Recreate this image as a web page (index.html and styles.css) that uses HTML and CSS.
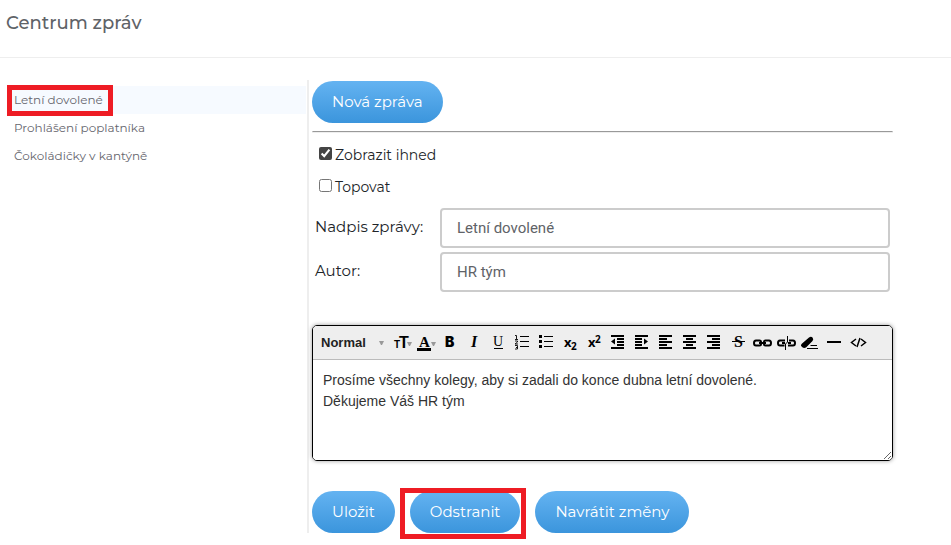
FILE: index.html
```html
<!DOCTYPE html>
<html lang="cs">
  <head>
    <meta charset="UTF-8" />
    <meta name="viewport" content="width=device-width, initial-scale=1.0" />
    <title>Centrum zpráv</title>
    <link rel="stylesheet" href="styles.css">
  </head>
  <body>
    <header class="page-header">
      <h1>Centrum zpráv</h1>
    </header>

    <div class="layout">
      <nav class="messages">
        <a href="#" class="message active"><span class="marked">Letní dovolené</span></a>
        <a href="#" class="message">Prohlášení poplatníka</a>
        <a href="#" class="message">Čokoládičky v kantýně</a>
      </nav>

      <main class="detail">
        <button type="button" class="btn">Nová zpráva</button>
        <hr />

        <form>
          <div class="check">
            <input type="checkbox" id="zobrazit" checked />
            <label for="zobrazit">Zobrazit ihned</label>
          </div>
          <div class="check">
            <input type="checkbox" id="topovat" />
            <label for="topovat">Topovat</label>
          </div>

          <div class="field">
            <label for="nadpis">Nadpis zprávy:</label>
            <input type="text" id="nadpis" value="Letní dovolené" />
          </div>
          <div class="field">
            <label for="autor">Autor:</label>
            <input type="text" id="autor" value="HR tým" />
          </div>

          <div class="editor">
            <div class="toolbar">
              <div class="format">
                <select aria-label="Formát">
                  <option>Normal</option>
                  <option>Header 1</option>
                  <option>Header 2</option>
                </select>
                <svg width="5" height="4" viewBox="0 0 5 4"><path d="M0 0h5L3 4H2z" fill="#999" /></svg>
              </div>
              <button type="button" class="tool" aria-label="Velikost písma">
                <svg viewBox="0 0 24 24">
                  <text x="4" y="18" class="sans" font-size="10">T</text>
                  <text x="9" y="18" class="sans" font-size="16">T</text>
                  <path d="M17 12h5l-2 4h-1z" fill="#999" />
                </svg>
              </button>
              <button type="button" class="tool" aria-label="Barva písma">
                <svg viewBox="0 0 24 24">
                  <text x="5" y="17" class="serif" font-size="15">A</text>
                  <path d="M3 18h14v3H3z" />
                  <path d="M17 12h5l-2 4h-1z" fill="#999" />
                </svg>
              </button>
              <button type="button" class="tool" aria-label="Tučně">
                <svg viewBox="0 0 24 24"><text x="7" y="17" class="heavy" font-size="14">B</text></svg>
              </button>
              <button type="button" class="tool" aria-label="Kurzíva">
                <svg viewBox="0 0 24 24"><text x="9" y="17" class="serif" font-size="16" font-style="italic">I</text></svg>
              </button>
              <button type="button" class="tool" aria-label="Podtržení">
                <svg viewBox="0 0 24 24">
                  <text x="7" y="16" class="serif light" font-size="14">U</text>
                  <path d="M8 18h9v1H8z" />
                </svg>
              </button>
              <button type="button" class="tool" aria-label="Číslovaný seznam">
                <svg viewBox="0 0 24 24">
                  <path d="M10 6h9v1h-9zM10 11h9v1h-9zM10 16h9v1h-9z" />
                  <path d="M5 5.500h1.500V9M5 9.500h3M5 11h2.500v1L5 14h3M5 15.500h2.500v3.500H5M6 17.500h1.500" fill="none" stroke="#000" stroke-width=".9" />
                </svg>
              </button>
              <button type="button" class="tool" aria-label="Seznam s odrážkami">
                <svg viewBox="0 0 24 24">
                  <path d="M10 6h9v1h-9zM10 11h9v1h-9zM10 16h9v1h-9z" />
                  <path d="M5 5h3v3H5zM5 10h3v3H5zM5 15h3v3H5z" />
                </svg>
              </button>
              <button type="button" class="tool" aria-label="Dolní index">
                <svg viewBox="0 0 24 24">
                  <text x="6" y="17" class="sub" font-size="13">x</text>
                  <text x="13" y="20" class="sub" font-size="10">2</text>
                </svg>
              </button>
              <button type="button" class="tool" aria-label="Horní index">
                <svg viewBox="0 0 24 24">
                  <text x="6" y="17" class="sub" font-size="13">x</text>
                  <text x="13" y="13" class="sub" font-size="10">2</text>
                </svg>
              </button>
              <button type="button" class="tool" aria-label="Zmenšit odsazení">
                <svg viewBox="0 0 24 24"><path d="M5 5h13v2H5zM11 8h7v2h-7zM11 11h7v2h-7zM11 14h7v2h-7zM5 17h13v2H5zM5 11.500l4-3v6z" /></svg>
              </button>
              <button type="button" class="tool" aria-label="Zvětšit odsazení">
                <svg viewBox="0 0 24 24"><path d="M5 5h13v2H5zM5 8h7v2H5zM5 11h7v2H5zM5 14h7v2H5zM5 17h13v2H5zM18 11.500l-4-3v6z" /></svg>
              </button>
              <button type="button" class="tool" aria-label="Zarovnat vlevo">
                <svg viewBox="0 0 24 24"><path d="M5 5h13v2H5zM5 8h8v2H5zM5 11h13v2H5zM5 14h8v2H5zM5 17h13v2H5z" /></svg>
              </button>
              <button type="button" class="tool" aria-label="Zarovnat na střed">
                <svg viewBox="0 0 24 24"><path d="M5 5h13v2H5zM8 8h7v2H8zM5 11h13v2H5zM8 14h7v2H8zM5 17h13v2H5z" /></svg>
              </button>
              <button type="button" class="tool" aria-label="Zarovnat vpravo">
                <svg viewBox="0 0 24 24"><path d="M5 5h13v2H5zM10 8h8v2h-8zM5 11h13v2H5zM10 14h8v2h-8zM5 17h13v2H5z" /></svg>
              </button>
              <button type="button" class="tool" aria-label="Přeškrtnutí">
                <svg viewBox="0 0 24 24">
                  <text x="8" y="17" class="serif" font-size="16">S</text>
                  <path d="M6 11h13v1H6z" />
                </svg>
              </button>
              <button type="button" class="tool" aria-label="Vložit odkaz">
                <svg viewBox="0 0 24 24"><path d="M11 12q0-1.500-1.500-1.500H6q-2 0-2 2.500t2 2.500h3.500Q11 15.500 11 14M14 12q0-1.500 1.500-1.500H19q2 0 2 2.500t-2 2.500h-3.500Q14 15.500 14 14M9 13h7" class="line" /></svg>
              </button>
              <button type="button" class="tool" aria-label="Odebrat odkaz">
                <svg viewBox="0 0 24 24">
                  <path d="M11 10.500H6q-2 0-2 2.500t2 2.500h4.500M15 10.500h4q2 0 2 2.500t-2 2.500h-5M8 13h3M14 13h3" class="line" />
                  <path d="M13.500 6v6l-2 2v6" fill="none" stroke="#000" />
                </svg>
              </button>
              <button type="button" class="tool" aria-label="Vymazat formátování">
                <svg viewBox="0 0 24 24"><path d="M3.500 14L11 7.500q2-1.500 3.500 0t0 3.500L8 17.500q-2 1-4-.500t-.500-3zM13 15h6v1h-7zM9 18h11v1H9z" /></svg>
              </button>
              <button type="button" class="tool" aria-label="Vodorovná čára">
                <svg viewBox="0 0 24 24"><path d="M5 11h14v2H5z" /></svg>
              </button>
              <button type="button" class="tool" aria-label="Zdrojový kód">
                <svg viewBox="0 0 24 24"><path d="M10 9l-4.500 3.500L10 16M15 9l4.500 3.500L15 16M14 8l-3 9" fill="none" stroke="#000" stroke-width="1.500" /></svg>
              </button>
            </div>
            <textarea aria-label="Text zprávy">Prosíme všechny kolegy, aby si zadali do konce dubna letní dovolené.
Děkujeme Váš HR tým</textarea>
          </div>

          <div class="actions">
            <button type="button" class="btn">Uložit</button>
            <div class="marked">
              <button type="button" class="btn">Odstranit</button>
            </div>
            <button type="button" class="btn">Navrátit změny</button>
          </div>
        </form>
      </main>
    </div>
  </body>
</html>
```

FILE: styles.css
```css
* {
  box-sizing: border-box;
}

body {
  margin: 0;
  padding-bottom: 12px;
  background: #fff;
  color: #212529;
  font-family: Montserrat, Inter, sans-serif;
  font-size: 15px;
}

.page-header {
  height: 58px;
  padding: 10px 6px;
  border-bottom: 1px solid #eee;
}

h1 {
  margin: 0;
  font-size: 18px;
  line-height: 26px;
  font-weight: 500;
  color: #5f6368;
}

.layout {
  display: flex;
  margin-top: 22px;
}

/* seznam zprav */
.messages {
  width: 309px;
  flex: none;
  padding: 6px 1px 0 7px;
  border-right: 2px solid #eee;
}

.message {
  display: block;
  height: 28px;
  padding-left: 7px;
  font-size: 12px;
  line-height: 28px;
  color: #66666e;
  text-decoration: none;
}

.message.active {
  background: #f6faff;
}

.marked {
  position: relative;
}

/* cervene zvyrazneni */
.marked::after {
  content: "";
  position: absolute;
  inset: -3px -6px -6px -10px;
  border: 5px solid #ee1c24;
  pointer-events: none;
}

.message .marked::after {
  inset: -7px -10px -9px -7px;
}

.detail {
  flex: 1;
  padding: 1px 58px 0 3px;
}

.btn {
  display: block;
  height: 42px;
  padding: 0 20px 2px;
  border: none;
  border-radius: 21px;
  background: linear-gradient(#64b3f1, #3b95dc);
  color: #fff;
  font-family: inherit;
  font-size: 15px;
  cursor: pointer;
}

hr {
  height: 2px;
  margin: 8px 0 6px;
  border: 1px solid #eee;
  border-top-color: #999;
}

.check {
  display: flex;
  align-items: center;
  height: 32px;
  padding-left: 7px;
  font-size: 14px;
}

.check input {
  margin: 0 3px 4px 0;
  accent-color: #444;
}

.field {
  display: flex;
  margin: 4px 3px 0;
}

.check + .field {
  margin-top: 5px;
}

.field label {
  width: 125px;
  flex: none;
  line-height: 38px;
}

.field input {
  flex: 1;
  height: 40px;
  padding: 0 15px;
  border: 2px solid #ccc;
  border-radius: 4px;
  color: #5f6368;
  font-family: Roboto, sans-serif;
  font-size: 15px;
}

.editor {
  margin-top: 33px;
  border: 1px solid #000;
  border-radius: 5px;
  box-shadow: 0 0 4px rgba(0, 0, 0, 0.4);
  overflow: hidden;
}

.toolbar {
  display: flex;
  height: 34px;
  padding: 4px 8px;
  background: #eee;
  border-bottom: 1px solid #bbb;
}

.format {
  display: flex;
  align-items: center;
  width: 69px;
}

.format select {
  width: 58px;
  padding: 0;
  border: none;
  background: none;
  appearance: none;
  color: #222;
  font: bold 13px "Liberation Sans", Arial, sans-serif;
}

.tool {
  width: 24px;
  height: 24px;
  padding: 0;
  border: none;
  background: none;
  cursor: pointer;
}

.tool svg {
  display: block;
  width: 24px;
  height: 24px;
}

.tool text {
  font-weight: bold;
}

.tool .sans {
  font-family: "Liberation Sans", sans-serif;
}

.tool .serif {
  font-family: "Liberation Serif", serif;
}

.tool .light {
  font-weight: 400;
}

.tool .heavy {
  font-family: Inter, sans-serif;
  font-weight: 900;
}

.tool .sub {
  font-family: "Open Sans", sans-serif;
}

.tool .line {
  fill: none;
  stroke: #000;
  stroke-width: 2;
}

textarea {
  display: block;
  width: 100%;
  height: 100px;
  padding: 10px;
  border: none;
  outline: none;
  resize: vertical;
  color: #333;
  font: 14px/21px "Liberation Sans", Arial, sans-serif;
}

.actions {
  display: flex;
  gap: 15px;
  margin-top: 30px;
}
```
